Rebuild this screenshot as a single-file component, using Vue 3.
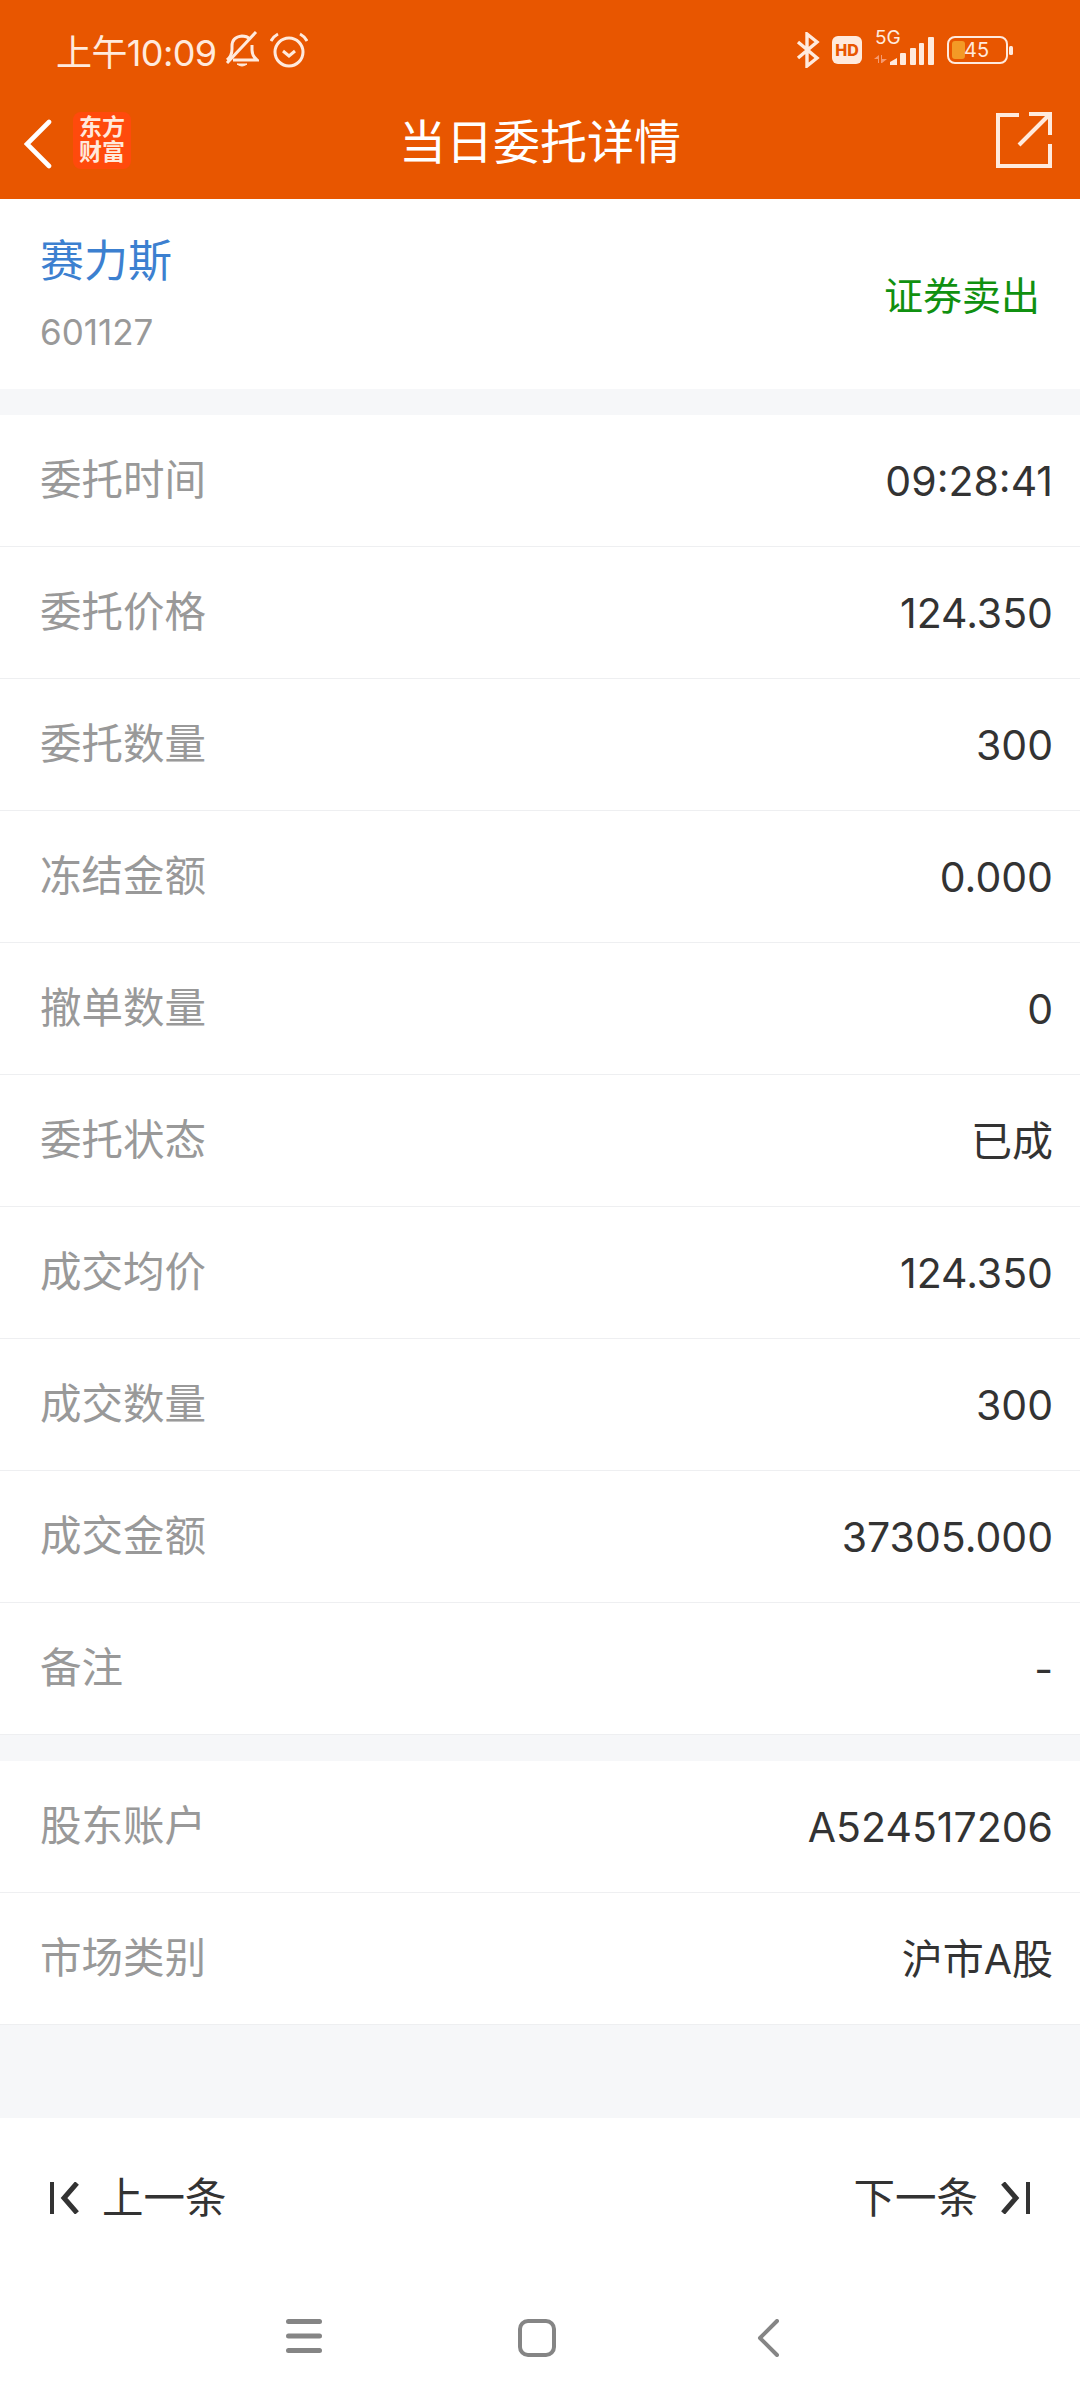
<script setup>
const groups = [
  [
    { label: '委托时间', value: '09:28:41' },
    { label: '委托价格', value: '124.350' },
    { label: '委托数量', value: '300' },
    { label: '冻结金额', value: '0.000' },
    { label: '撤单数量', value: '0' },
    { label: '委托状态', value: '已成', cjk: true },
    { label: '成交均价', value: '124.350' },
    { label: '成交数量', value: '300' },
    { label: '成交金额', value: '37305.000' },
    { label: '备注', value: '-' }
  ],
  [
    { label: '股东账户', value: 'A524517206' },
    { label: '市场类别', value: '沪市A股', cjk: true }
  ]
]
</script>

<template>
  <div class="page">
    <header class="head">
      <div class="status">
        <div class="status-left">
          <span class="clock">上午10:09</span>
          <svg class="bell" width="34" height="38" viewBox="0 0 34 38" fill="none" stroke="#ffeadd" stroke-width="3">
            <path d="M2 29 Q7 25 7 18 V15 Q7 6 17 5 Q22 5 25 8" />
            <path d="M27 14 V19 Q27 25 32 29 H8" />
            <path d="M31 1 L2 32" />
            <path d="M12 33 Q17 37 22 33 Z" fill="#ffeadd" stroke-width="1" />
          </svg>
          <svg class="alarm" width="38" height="36" viewBox="0 0 38 36" fill="none" stroke="#ffeadd" stroke-width="3">
            <circle cx="19" cy="20" r="14" />
            <path d="M13 19 L19 24 L25 19" />
            <path d="M1 9 Q4 4 8 2" />
            <path d="M37 9 Q34 4 30 2" />
          </svg>
        </div>
        <div class="status-right">
          <svg width="24" height="36" viewBox="0 0 24 36" fill="none" stroke="#ffeadd" stroke-width="3.4">
            <path d="M2 10 L21 26 L11 34 V2 L21 10 L2 26" />
          </svg>
          <span class="hd">HD</span>
          <div class="signal">
            <span class="five-g">5G</span>
            <svg class="bars" width="61" height="30" viewBox="0 0 61 30" fill="#ffeadd">
              <path d="M1 24 L6 20 V28 H5 V24 Z M8 20 H9 V24 L14 24 L9 28 H8 Z" fill="#f59a70" />
              <path d="M17 30 V27 L24 23 V30 Z" />
              <rect x="27" y="18" width="6" height="12" rx="1" />
              <rect x="37" y="13" width="6" height="17" rx="1" />
              <rect x="46" y="8" width="5" height="22" rx="1" />
              <rect x="55" y="2" width="6" height="28" rx="1" />
            </svg>
          </div>
          <div class="battery">
            <div class="battery-box">
              <div class="battery-fill"></div>
              <span class="battery-num">45</span>
            </div>
            <i class="battery-nub"></i>
          </div>
        </div>
      </div>
      <div class="nav">
        <svg class="back" width="28" height="50" viewBox="0 0 28 50" fill="none" stroke="#fff" stroke-width="4.6" stroke-linecap="round">
          <path d="M25 3 L3 25 L25 47" />
        </svg>
        <div class="logo"><span>东方</span><span>财富</span></div>
        <div class="title">当日委托详情</div>
        <svg class="share" width="56" height="56" viewBox="0 0 56 56" fill="none" stroke="#ffeadd" stroke-width="4">
          <path d="M23 3 H2 V54 H54 V32" />
          <path d="M23 33 L53 3" />
          <path d="M33 2 H54 V23" />
        </svg>
      </div>
    </header>

    <section class="stock">
      <div>
        <div class="stock-name">赛力斯</div>
        <div class="stock-code">601127</div>
      </div>
      <div class="stock-side">证券卖出</div>
    </section>

    <section v-for="(group, i) in groups" :key="i" class="group">
      <div v-for="row in group" :key="row.label" class="row">
        <span class="row-label">{{ row.label }}</span>
        <span class="row-value" :class="{ cjk: row.cjk }">{{ row.value }}</span>
      </div>
    </section>

    <div class="spacer"></div>

    <div class="pager">
      <div class="pager-btn">
        <svg width="30" height="32" viewBox="0 0 30 32" fill="none" stroke="#333" stroke-width="4">
          <path d="M2 0 V32" />
          <path d="M27 1 L14 16 L27 31" stroke-width="5" />
        </svg>
        <span class="pager-text">上一条</span>
      </div>
      <div class="pager-btn">
        <span class="pager-text">下一条</span>
        <svg width="30" height="32" viewBox="0 0 30 32" fill="none" stroke="#333" stroke-width="4">
          <path d="M28 0 V32" />
          <path d="M3 1 L16 16 L3 31" stroke-width="5" />
        </svg>
      </div>
    </div>

    <div class="sysnav">
      <svg width="36" height="34" viewBox="0 0 36 34" fill="#858585">
        <rect x="0" y="0" width="36" height="5" rx="2.5" />
        <rect x="0" y="14.500" width="36" height="5" rx="2.5" />
        <rect x="0" y="29" width="36" height="5" rx="2.500" />
      </svg>
      <svg width="38" height="38" viewBox="0 0 38 38" fill="none" stroke="#858585" stroke-width="4">
        <rect x="2" y="2" width="34" height="34" rx="8" />
      </svg>
      <svg class="sys-back" width="22" height="38" viewBox="0 0 22 38" fill="none" stroke="#858585" stroke-width="4" stroke-linecap="round" stroke-linejoin="round">
        <path d="M20 2 L3 19 L20 36" />
      </svg>
    </div>
  </div>
</template>

<style>
html, body {
  margin: 0;
  background: #fff;
}
</style>

<style scoped>
.page {
  width: 1080px;
  height: 2400px;
  display: flex;
  flex-direction: column;
  background: #f6f7f9;
  font-family: Inter, "Noto Sans CJK SC", sans-serif;
  overflow: hidden;
}
.head {
  height: 199px;
  background: #e85600;
  flex: none;
}
.status {
  height: 80px;
  padding: 10px 67px 0 56px;
  display: flex;
  justify-content: space-between;
  align-items: center;
  color: #ffeadd;
}
.status-left {
  display: flex;
  align-items: center;
}
.clock {
  font-size: 36px;
  letter-spacing: -0.6px;
}
.bell {
  margin-left: 8px;
}
.alarm {
  margin-left: 11px;
}
.status-right {
  display: flex;
  align-items: center;
}
.hd {
  margin-left: 12px;
  width: 30px;
  height: 28px;
  border-radius: 6px;
  background: #ffeadd;
  color: #e85600;
  font-size: 16px;
  font-weight: 800;
  line-height: 28px;
  text-align: center;
}
.signal {
  position: relative;
  width: 61px;
  height: 30px;
  margin-left: 11px;
}
.five-g {
  position: absolute;
  left: 2px;
  top: -9px;
  font-size: 19px;
  line-height: 24px;
  color: #ffeadd;
}
.bars {
  display: block;
}
.battery {
  margin-left: 13px;
  display: flex;
  align-items: center;
}
.battery-box {
  position: relative;
  width: 61px;
  height: 28px;
  box-sizing: border-box;
  border: 2.500px solid #ffeadd;
  border-radius: 8px;
  padding: 3px;
}
.battery-fill {
  width: 13px;
  height: 100%;
  background: #f39a26;
  border-radius: 3px;
}
.battery-num {
  position: absolute;
  left: 15px;
  top: -2px;
  font-size: 20px;
  line-height: 28px;
  color: #ffeadd;
}
.battery-nub {
  width: 4px;
  height: 9px;
  margin-left: 1px;
  border-radius: 1.500px;
  background: #ffeadd;
}
.nav {
  height: 100px;
  padding: 0 28px 0 24px;
  display: flex;
  align-items: center;
  position: relative;
}
.back {
  margin-top: 8px;
}
.logo {
  margin-left: 21px;
  width: 58px;
  height: 57px;
  border-radius: 8px;
  background: #ff4a0c;
  color: #ffe9dc;
  display: flex;
  flex-direction: column;
  align-items: center;
  justify-content: center;
  font-size: 23px;
  font-weight: 700;
  line-height: 25px;
}
.title {
  position: absolute;
  left: 0;
  right: 0;
  top: 0;
  line-height: 104px;
  text-align: center;
  color: #fff;
  font-size: 47px;
}
.share {
  margin-left: auto;
}
.stock {
  height: 190px;
  flex: none;
  box-sizing: border-box;
  padding: 0 40px;
  background: #fff;
  display: flex;
  justify-content: space-between;
  align-items: center;
}
.stock-name {
  color: #3c80d0;
  font-size: 44px;
  line-height: 62px;
  margin-top: -5px;
}
.stock-code {
  margin-top: 18px;
  color: #999;
  font-size: 35px;
  line-height: 44px;
}
.stock-side {
  color: #109010;
  font-size: 39px;
  margin-top: -3px;
}
.group {
  flex: none;
  margin-top: 26px;
  background: #fff;
}
.row {
  height: 132px;
  box-sizing: border-box;
  padding: 0 27px 0 40px;
  border-bottom: 1px solid #eeeff1;
  display: flex;
  justify-content: space-between;
  align-items: center;
}
.row-label {
  color: #999;
  font-size: 41.5px;
  margin-top: -7px;
}
.row-value {
  color: #333;
  font-size: 41px;
}
.row-value.cjk {
  margin-top: -6px;
}
.spacer {
  flex: 1;
}
.pager {
  height: 157px;
  flex: none;
  box-sizing: border-box;
  padding: 0 50px;
  background: #fff;
  display: flex;
  justify-content: space-between;
  align-items: center;
  color: #333;
  font-size: 41.5px;
}
.pager-btn {
  display: flex;
  align-items: center;
  gap: 22px;
}
.pager-btn svg {
  margin-top: 2px;
}
.pager-text {
  margin-top: -3px;
}
.sysnav {
  height: 125px;
  flex: none;
  box-sizing: border-box;
  background: #fff;
  display: flex;
  align-items: flex-start;
  padding: 44px 0 0 286px;
  gap: 196px;
}
.sys-back {
  margin-left: 5px;
}
</style>
